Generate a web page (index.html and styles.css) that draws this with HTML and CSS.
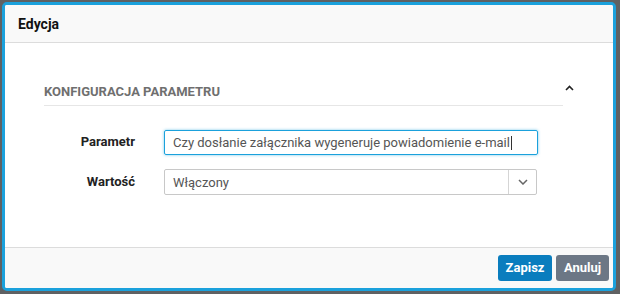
FILE: index.html
```html
<!DOCTYPE html>
<html lang="pl">
<head>
    <meta charset="UTF-8">
    <meta name="viewport" content="width=device-width, initial-scale=1.0">
    <title>Edycja</title>
    <link rel="stylesheet" href="styles.css">
</head>
<body>

<div class="modal">
    <div class="modal-header">Edycja</div>

    <div class="modal-body">
        <div class="section-head">
            <div class="section-title">KONFIGURACJA PARAMETRU</div>
            <div class="section-toggle">
                <svg width="9" height="6" viewBox="0 0 9 6"><path d="M1 5 L4.5 1.5 L8 5" fill="none" stroke="#222" stroke-width="1.6"/></svg>
            </div>
        </div>

        <div class="form">
            <div class="form-row">
                <label class="form-label">Parametr</label>
                <div class="input focused">Czy dosłanie załącznika wygeneruje powiadomienie e-mail<span class="cursor"></span></div>
            </div>
            <div class="form-row">
                <label class="form-label">Wartość</label>
                <div class="select">
                    <span class="select-value">Włączony</span>
                    <span class="select-arrow">
                        <svg width="10" height="6" viewBox="0 0 10 6"><path d="M1 1 L5 5 L9 1" fill="none" stroke="#666" stroke-width="1.5"/></svg>
                    </span>
                </div>
            </div>
        </div>
    </div>

    <div class="modal-footer">
        <button class="btn btn-primary">Zapisz</button>
        <button class="btn btn-default">Anuluj</button>
    </div>
</div>

</body>
</html>
```

FILE: styles.css
```css
* {box-sizing: border-box; margin: 0; padding: 0; font-family: Roboto, "Liberation Sans", sans-serif;}
body {background-color: #5f6163; padding: 2px 4px 3px 2px; height: 294px; overflow: hidden;}
.modal {width: 614px; height: 289px; border: 3px solid #1ba1dc; border-radius: 5px; background-color: #fff; display: flex; flex-direction: column; overflow: hidden;}
.modal-header {height: 38px; background-color: #f9f9f9; border-bottom: 1px solid #dcdcdc; padding: 0 13px; font-size: 14px; font-weight: bold; color: #111; display: flex; align-items: center;}
.modal-body {flex: 1; padding: 33px 30px 0 39px;}
.section-head {display: flex; align-items: flex-start;}
.section-title {flex: 1; height: 30px; border-bottom: 1px solid #e6e6e6; font-size: 13px; font-weight: bold; color: #6f6f6f; padding-top: 8px;}
.section-toggle {width: 20px; padding: 9px 0 0 2px;}
.section-toggle svg {display: block;}
.form {padding-top: 24px;}
.form-row {display: flex; align-items: center; margin-bottom: 14px;}
.form-label {width: 91px; text-align: right; font-size: 13px; font-weight: bold; color: #222; margin-right: 29px; padding-bottom: 2px;}
.input {width: 374px; height: 25px; border: 1px solid #c8c8c8; border-radius: 2px; padding: 0 8px; font-size: 13px; color: #555; display: flex; align-items: center; white-space: nowrap;}
.input.focused {border-color: #1ba1dc; box-shadow: 0 0 3px rgba(27, 161, 220, 0.6);}
.cursor {display: inline-block; width: 1px; height: 14px; background-color: #333; margin-left: 1px;}
.select {width: 373px; height: 26px; border: 1px solid #c8c8c8; border-radius: 2px; display: flex; font-size: 13px; color: #555;}
.select-value {flex: 1; padding: 0 8px; display: flex; align-items: center;}
.select-arrow {width: 28px; border-left: 1px solid #d5d5d5; display: flex; align-items: center; justify-content: center;}
.modal-footer {height: 41px; background-color: #f9f9f9; border-top: 1px solid #dcdcdc; display: flex; justify-content: flex-end; align-items: center; gap: 4px; padding: 0 4px 1px 0;}
.btn {height: 26px; border: none; border-radius: 3px; color: #fff; font-size: 13px; font-weight: bold; padding: 0 6px; cursor: pointer;}
.btn-primary {background-color: #0a7dbe; width: 54px;}
.btn-default {background-color: #6c7785; width: 53px;}
```
